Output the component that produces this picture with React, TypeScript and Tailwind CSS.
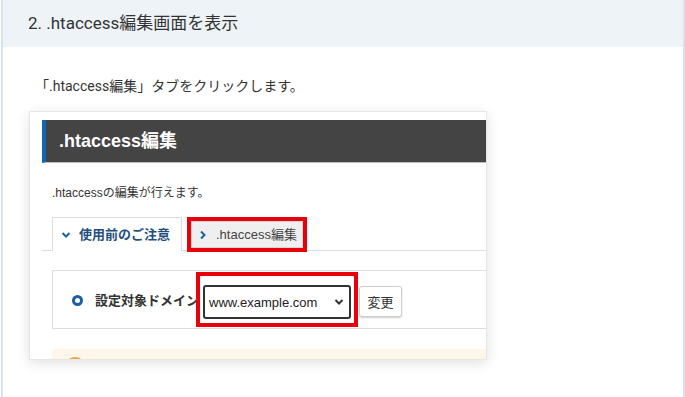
import React from "react";

const jp = '"Noto Sans CJK JP", sans-serif';
const win = '"Liberation Sans", "Noto Sans CJK JP", sans-serif';

export default function App() {
  return (
    <div className="w-[685px] h-[397px] bg-white overflow-hidden">
      <div className="ml-[1px] w-[684px] h-[397px] border-x-2 border-[#d6e4f1] bg-white">
        <div
          className="h-[47px] bg-[#eef3f8] flex items-center pl-[25px] text-[17px] text-[#333]"
          style={{ fontFamily: '"Roboto", "Noto Sans CJK JP", sans-serif' }}
        >
          2. .htaccess編集画面を表示
        </div>
        <div
          className="mt-[29px] pl-[32px] text-[14px] leading-[20px] text-[#333]"
          style={{ fontFamily: '"Roboto", "Noto Sans CJK JP", sans-serif' }}
        >
          「.htaccess編集」タブをクリックします。
        </div>
        <div className="mt-[15px] ml-[26px] w-[458px] h-[249px] border border-[#e6e6e6] bg-white overflow-hidden shadow-[0_3px_12px_rgba(0,0,0,0.12)]">
          <div className="pl-[12px] pt-[8px] w-[640px]" style={{ fontFamily: win }}>
            <div className="h-[43px] bg-[#444] border-l-[4px] border-[#1565b0] border-b border-b-[#bdbdbd] flex items-center pl-[13px] text-white text-[18px] font-bold">
              .htaccess編集
            </div>
            <div className="mt-[22px] pl-[10px] text-[12px] leading-[16px] text-[#333]">
              .htaccessの編集が行えます。
            </div>
            <div className="mt-[16px] flex items-end border-b border-[#dddddd] pl-[10px] h-[34px]">
              <div className="w-[130px] h-[34px] -mb-px bg-white border border-b-0 border-[#dddddd] flex items-center pl-[8px] gap-[8px] text-[13px] font-bold text-[#1f4f7c]">
                <svg width="10" height="10" viewBox="0 0 10 10">
                  <path d="M1.5 3 L5 6.5 L8.5 3" stroke="#1a5fa0" strokeWidth="2" fill="none" />
                </svg>
                <span style={{ fontFamily: win }}>使用前のご注意</span>
              </div>
              <div className="ml-[5px] -mb-[2px] w-[120px] h-[35px] border-[4px] border-[#e8000b] bg-white">
                <div className="h-full bg-[#efefef] border border-[#d4d4d4] flex items-center pl-[7px] gap-[9px] text-[13px] text-[#444]">
                  <svg width="8" height="10" viewBox="0 0 8 10">
                    <path d="M2 1.5 L5.5 5 L2 8.5" stroke="#1a5fa0" strokeWidth="2" fill="none" />
                  </svg>
                  <span>.htaccess編集</span>
                </div>
              </div>
            </div>
            <div className="mt-[19px] ml-[10px] h-[59px] border border-[#dddddd] flex items-center pl-[19px]">
              <div className="w-[11px] h-[11px] rounded-full border-[3px] border-[#1a5fa0] mt-[1px]" />
              <div className="ml-[12px] w-[101px] whitespace-nowrap text-[13px] font-bold text-[#333]" style={{ fontFamily: jp }}>
                設定対象ドメイン
              </div>
              <div className="relative z-10 w-[162px] h-[55px] border-[4px] border-[#e8000b] bg-white flex items-center pl-[3px] pt-[4px]">
                <div className="w-[148px] h-[34px] border-2 border-[#333] rounded-[3px] flex items-center justify-between pl-[4px] pr-[5px] text-[13px] text-[#222]" style={{ fontFamily: win }}>
                  <span className="mt-[2px]">www.example.com</span>
                  <svg width="10" height="8" viewBox="0 0 10 8">
                    <path d="M1.5 2 L5 5.5 L8.5 2" stroke="#333" strokeWidth="2" fill="none" />
                  </svg>
                </div>
              </div>
              <div className="ml-[1px] mt-[4px] w-[43px] h-[31px] border border-[#cfcfcf] rounded-[3px] bg-white shadow-[0_1px_2px_rgba(0,0,0,0.2)] flex items-center justify-center text-[13px] text-[#333]" style={{ fontFamily: jp }}>
                変更
              </div>
            </div>
            <div className="mt-[20px] ml-[10px] h-[30px] bg-[#fdf6e9] pl-[13px] pt-[8px]">
              <div className="w-[20px] h-[20px] rounded-full border-2 border-[#f4a24d]" />
            </div>
          </div>
        </div>
      </div>
    </div>
  );
}
